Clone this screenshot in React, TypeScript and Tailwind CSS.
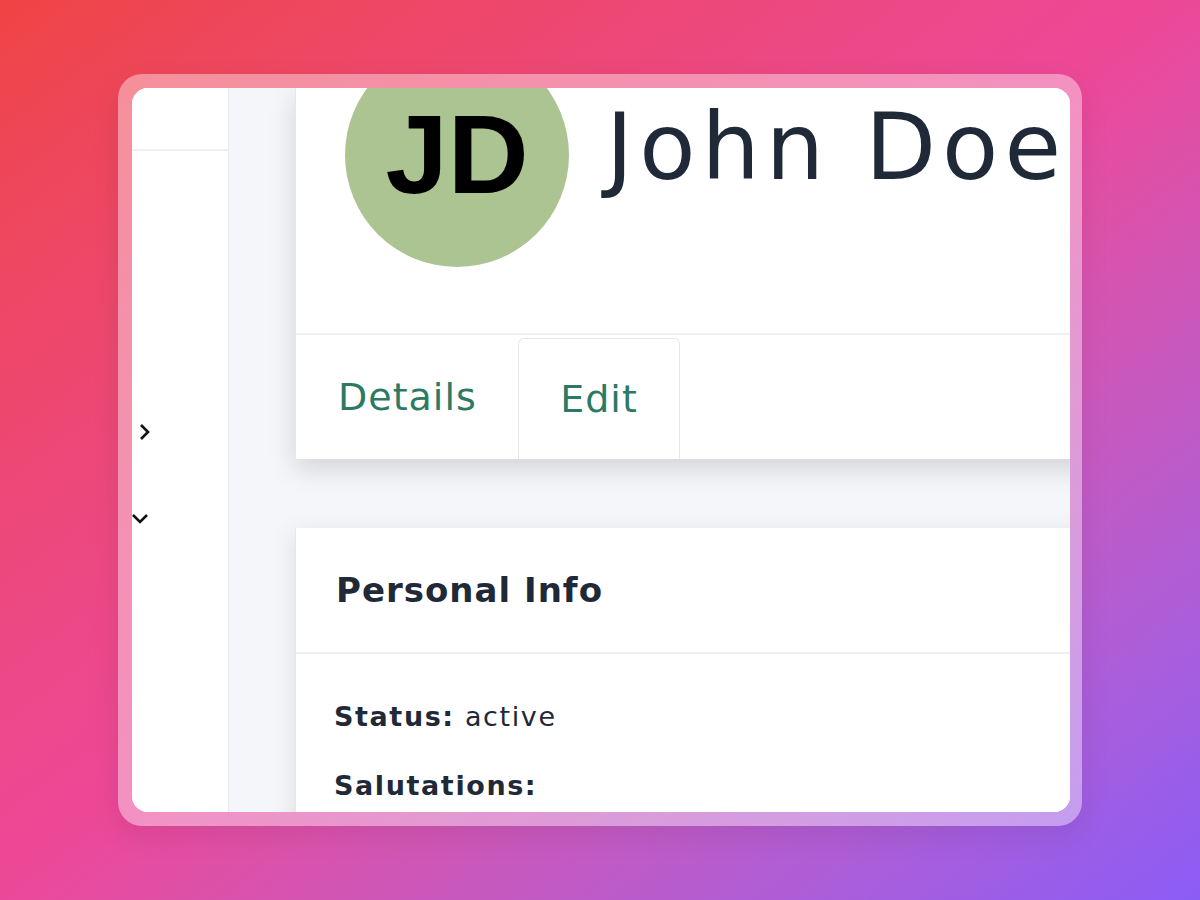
import React from 'react'

const font = { fontFamily: '"DejaVu Sans", "Noto Sans", sans-serif' }

const Sidebar = () => {
  return (
    <div className="w-[97px] shrink-0 bg-white border-r border-[#e8ebef] flex flex-col">
      <div className="h-[63px] border-b-2 border-[#edf0f4]" />
      <div className="pt-[272px] pl-[7px]">
        <svg width="12" height="18" viewBox="0 0 12 18" fill="none">
          <polyline points="2,2 9,9 2,16" stroke="#111" strokeWidth="2.6" />
        </svg>
      </div>
      <div className="pt-[72px] pl-0">
        <svg width="18" height="12" viewBox="0 0 18 12" fill="none">
          <polyline points="1,2 8,9 15,2" stroke="#111" strokeWidth="2.6" />
        </svg>
      </div>
    </div>
  )
}

const ProfileCard = () => {
  return (
    <div className="w-[900px] bg-white shadow-[0_10px_26px_rgba(0,0,0,0.14)] border-l border-[#e5e7eb]">
      <div className="h-[245px] flex items-start pl-[49px]">
        <div className="w-[224px] h-[224px] -mt-[45px] rounded-full bg-[#abc492] flex items-center justify-center shrink-0">
          <span className="text-[112px] font-bold text-black leading-none" style={{ fontFamily: '"Liberation Sans", Arial, sans-serif' }}>JD</span>
        </div>
        <div className="ml-[37px] mt-[14px] text-[92px] leading-none text-[#1f2937] whitespace-nowrap tracking-[6px]" style={font}>
          John Doe
        </div>
      </div>
      <div className="border-t-2 border-[#edf0f3] flex h-[126px]">
        <div className="w-[222px] flex items-center pl-[42px] text-[38px] text-[#2d7a63] tracking-[1px]" style={font}>
          Details
        </div>
        <div className="mt-[3px] w-[162px] border border-b-0 border-[#e5e7eb] rounded-t-[6px] flex items-center justify-center text-[38px] text-[#2d7a63] tracking-[1px]" style={font}>
          Edit
        </div>
      </div>
    </div>
  )
}

const InfoCard = () => {
  return (
    <div className="w-[900px] h-[400px] bg-white shadow-[0_6px_24px_rgba(0,0,0,0.1)] border-l border-[#e5e7eb] mt-[69px]">
      <div className="h-[124px] flex items-center pl-[40px] text-[34px] font-semibold text-[#1f2937] tracking-[1px]" style={font}>
        Personal Info
      </div>
      <div className="border-t-2 border-[#edf0f3] pl-[38px] pt-[43px] text-[27px] text-[#1f2937] tracking-[1.6px]" style={font}>
        <div><span className="font-bold">Status:</span> active</div>
        <div className="mt-[28px]"><span className="font-bold">Salutations:</span></div>
      </div>
    </div>
  )
}

const App = () => {
  return (
    <div className="w-[1200px] h-[900px] bg-gradient-to-br from-[#ef4444] via-[#ec4899] to-[#8b5cf6] flex items-center justify-center">
      <div className="w-[964px] h-[752px] rounded-[24px] bg-white/40 pt-[14px] pl-[14px] pr-[12px] pb-[14px] shadow-[0_10px_30px_rgba(0,0,0,0.08)]">
        <div className="w-full h-full rounded-[16px] bg-white overflow-hidden flex">
          <Sidebar />
          <div className="flex-1 bg-[#f4f6f9] pl-[66px] overflow-hidden">
            <ProfileCard />
            <InfoCard />
          </div>
        </div>
      </div>
    </div>
  )
}

export default App
